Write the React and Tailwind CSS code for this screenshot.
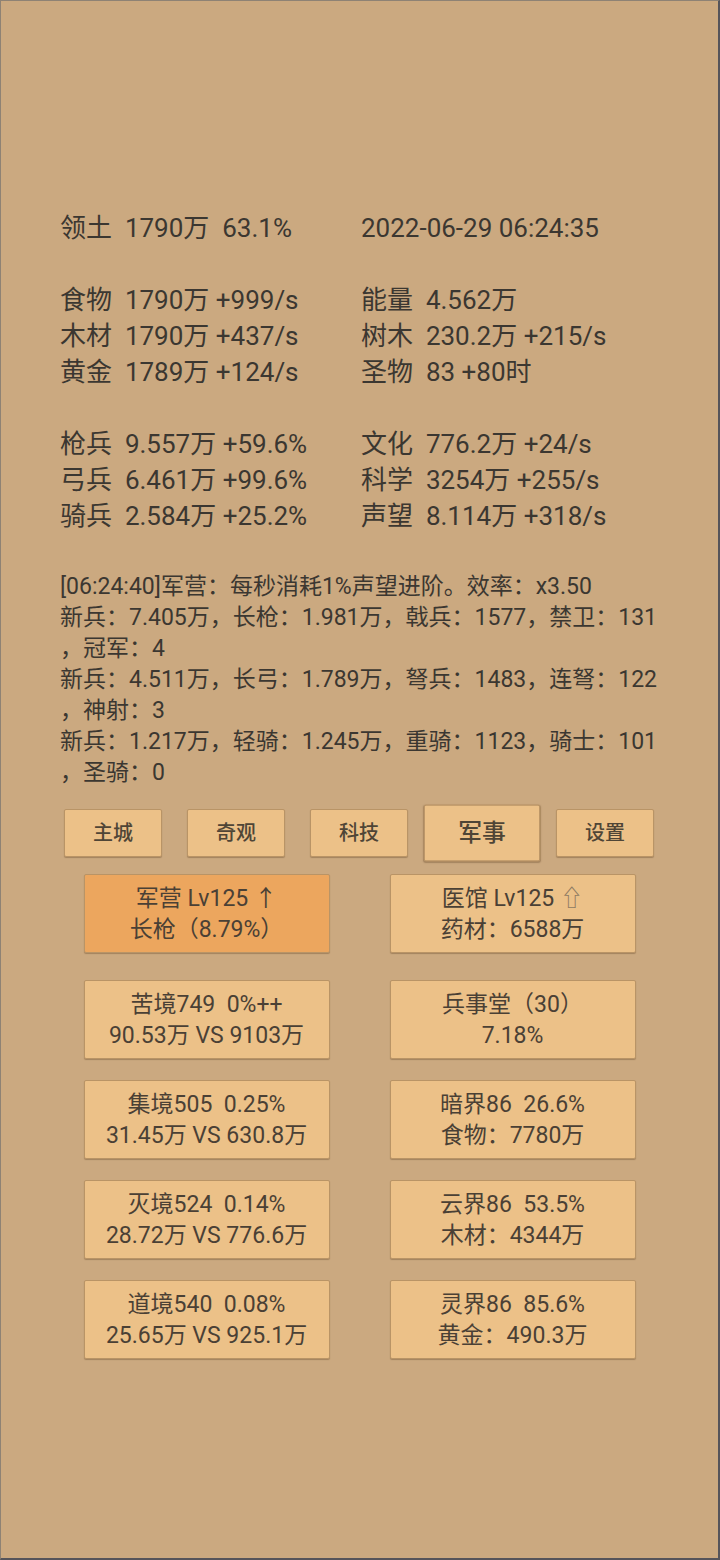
import React from "react";

const FONT = "font-['Roboto','Noto_Sans_CJK_SC',sans-serif]";

const topRows = [
  ["领土  1790万  63.1%", "2022-06-29 06:24:35"],
  [" ", " "],
  ["食物  1790万 +999/s", "能量  4.562万"],
  ["木材  1790万 +437/s", "树木  230.2万 +215/s"],
  ["黄金  1789万 +124/s", "圣物  83 +80时"],
  [" ", " "],
  ["枪兵  9.557万 +59.6%", "文化  776.2万 +24/s"],
  ["弓兵  6.461万 +99.6%", "科学  3254万 +255/s"],
  ["骑兵  2.584万 +25.2%", "声望  8.114万 +318/s"],
];

const logLines = [
  "[06:24:40]军营：每秒消耗1%声望进阶。效率：x3.50",
  "新兵：7.405万，长枪：1.981万，戟兵：1577，禁卫：131",
  "，冠军：4",
  "新兵：4.511万，长弓：1.789万，弩兵：1483，连弩：122",
  "，神射：3",
  "新兵：1.217万，轻骑：1.245万，重骑：1123，骑士：101",
  "，圣骑：0",
];

const tabs = ["主城", "奇观", "科技", "军事", "设置"];

const buildings = [
  [
    { a: "军营 Lv125", arrow: "↑", b: "长枪（8.79%）", active: true },
    { a: "医馆 Lv125", arrow: "⇧", b: "药材：6588万", faint: true },
  ],
  [
    { a: "苦境749  0%++", b: "90.53万 VS 9103万" },
    { a: "兵事堂（30）", b: "7.18%" },
  ],
  [
    { a: "集境505  0.25%", b: "31.45万 VS 630.8万" },
    { a: "暗界86  26.6%", b: "食物：7780万" },
  ],
  [
    { a: "灭境524  0.14%", b: "28.72万 VS 776.6万" },
    { a: "云界86  53.5%", b: "木材：4344万" },
  ],
  [
    { a: "道境540  0.08%", b: "25.65万 VS 925.1万" },
    { a: "灵界86  85.6%", b: "黄金：490.3万" },
  ],
];

function BuildingButton({ item }) {
  return (
    <button
      className={`w-[246px] h-[79px] flex flex-col items-center justify-center rounded-[2px] border border-[#b99466] shadow-[0_1px_1px_rgba(90,60,30,0.35)] text-[23px] leading-[31px] text-[#4a4035] whitespace-pre ${
        item.active ? "bg-[#eca65e]" : "bg-[#ecc188]"
      }`}
    >
      <span>
        {item.a}
        {item.arrow && (
          <span className={item.faint ? "ml-[6px] text-[#8d7a62]" : "ml-[6px]"}>
            {item.arrow}
          </span>
        )}
      </span>
      <span>{item.b}</span>
    </button>
  );
}

export default function App() {
  return (
    <div
      className={`w-[720px] h-[1560px] bg-[#cba980] border-l border-t border-[#8e8274] border-r-2 border-b-2 border-r-[#55545a] border-b-[#55545a] ${FONT} text-[#3b3731] overflow-hidden`}
    >
      <div className="pt-[209px] pl-[59px] pr-[60px]">
        {/* resource overview */}
        <div className="grid grid-cols-[301px_1fr] text-[26px] leading-[36px] whitespace-pre">
          {topRows.map(([l, r], i) => (
            <React.Fragment key={i}>
              <div>{l}</div>
              <div>{r}</div>
            </React.Fragment>
          ))}
        </div>

        {/* battle log */}
        <div className="mt-[37px] text-[23px] leading-[31px] whitespace-pre">
          {logLines.map((t, i) => (
            <div key={i}>{t}</div>
          ))}
        </div>
      </div>

      {/* tab bar */}
      <div className="mt-[17px] pl-[63px] flex items-center h-[56px] gap-[25px]">
        {tabs.map((t) => {
          const sel = t === "军事";
          return (
            <button
              key={t}
              className={`w-[98px] h-[48px] flex items-center justify-center rounded-[2px] border border-[#b99466] bg-[#ecc188] shadow-[0_1px_1px_rgba(90,60,30,0.35)] text-[20px] font-medium text-[#4f4536] ${
                sel ? "scale-[1.19]" : ""
              }`}
            >
              {t}
            </button>
          );
        })}
      </div>

      {/* building panels */}
      <div className="mt-[13px] flex flex-col items-center">
        {buildings.map((row, i) => (
          <div
            key={i}
            className={`flex gap-[60px] ${i === 0 ? "mb-[27px]" : "mb-[21px]"}`}
          >
            <BuildingButton item={row[0]} />
            <BuildingButton item={row[1]} />
          </div>
        ))}
      </div>
    </div>
  );
}
